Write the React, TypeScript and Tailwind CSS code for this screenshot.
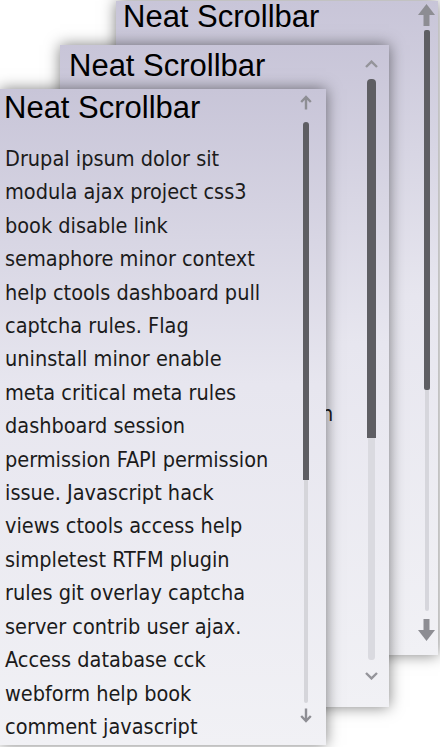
import React from "react";

const LINES = [
  "Drupal ipsum dolor sit",
  "modula ajax project css3",
  "book disable link",
  "semaphore minor context",
  "help ctools dashboard pull",
  "captcha rules. Flag",
  "uninstall minor enable",
  "meta critical meta rules",
  "dashboard session",
  "permission FAPI permission",
  "issue. Javascript hack",
  "views ctools access help",
  "simpletest RTFM plugin",
  "rules git overlay captcha",
  "server contrib user ajax.",
  "Access database cck",
  "webform help book",
  "comment javascript",
  "dashboard views hook",
];

function Content({ variant }: { variant: "front" | "middle" | "back" }) {
  const titleCls =
    variant === "front"
      ? "pl-[4px] pt-[1px]"
      : variant === "middle"
        ? "pl-[9px] pt-[3px]"
        : "pl-[7px] pt-[0px]";
  const bodyCls =
    variant === "front"
      ? "pl-[5px] pt-[17px]"
      : variant === "middle"
        ? "pl-[10px] pt-[15px]"
        : "pl-[8px] pt-[17px]";
  return (
    <>
      <div
        className={`h-[36px] font-['Liberation_Sans',Arial,sans-serif] text-[31px] leading-[35px] text-black whitespace-nowrap ${titleCls}`}
      >
        Neat Scrollbar
      </div>
      <div
        className={`font-['DejaVu_Sans_Condensed','DejaVu_Sans',sans-serif] font-stretch-condensed text-[21.5px] leading-[33.4px] text-[#1b1b1b] ${bodyCls}`}
      >
        {LINES.map((l, i) => (
          <div key={i} className="whitespace-nowrap">
            {l}
          </div>
        ))}
      </div>
    </>
  );
}

function ThinArrow({ down = false }: { down?: boolean }) {
  return (
    <svg width="12" height="15" viewBox="0 0 12 15" className={down ? "rotate-180" : ""}>
      <path d="M6 14.5 V2 M1.2 7 L6 2 L10.8 7" fill="none" stroke="#8e8e94" strokeWidth="2.4" />
    </svg>
  );
}

function Chevron({ down = false }: { down?: boolean }) {
  return (
    <svg width="13" height="8" viewBox="0 0 13 8" className={down ? "rotate-180" : ""}>
      <path d="M1 7 L6.5 1.6 L12 7" fill="none" stroke="#94949a" strokeWidth="2.4" />
    </svg>
  );
}

function ThickArrow({ down = false }: { down?: boolean }) {
  return (
    <svg width="17" height="22" viewBox="0 0 17 22" className={down ? "rotate-180" : ""}>
      <path d="M0 11 L8.5 0 L17 11 Z" fill="#8d8d93" />
      <rect x="5.5" y="10" width="6" height="12" fill="#8d8d93" />
    </svg>
  );
}

export default function App() {
  return (
    <div className="relative h-[747px] w-[440px] overflow-hidden bg-white">
      <div className="grid">
        {/* back panel */}
        <div className="relative col-start-1 row-start-1 ml-[116px] mt-[1px] h-[654px] w-[322px] overflow-hidden bg-linear-to-b from-[#c8c5d8] via-[#e7e6ef] via-45% to-[#f1f1f5] shadow-[0_0_14px_rgba(0,0,0,0.5)]">
          <div className="-mt-[2px]">
            <Content variant="back" />
          </div>
          <div className="absolute right-[3px] top-[3px] flex h-[640px] w-[17px] flex-col items-center">
            <ThickArrow />
            <div className="mt-[4px] h-[360px] w-[6px] rounded-[2px] bg-[#5e5e63]" />
            <div className="h-[221px] w-[4px] rounded-b-[2px] bg-[#d6d6dc]" />
            <div className="mt-[8px]">
              <ThickArrow down />
            </div>
          </div>
        </div>

        {/* middle panel */}
        <div className="relative col-start-1 row-start-1 ml-[60px] mt-[45px] h-[662px] w-[329px] overflow-hidden bg-linear-to-b from-[#c8c5d8] via-[#e7e6ef] via-45% to-[#f1f1f5] shadow-[0_0_14px_rgba(0,0,0,0.5)]">
          <Content variant="middle" />
          <div className="absolute right-[11px] top-[15px] flex w-[13px] flex-col items-center">
            <Chevron />
            <div className="mt-[11px] h-[359px] w-[9px] rounded-t-[4px] bg-[#5e5e63]" />
            <div className="h-[222px] w-[7px] rounded-b-[3px] bg-[#dadae0]" />
            <div className="mt-[12px]">
              <Chevron down />
            </div>
          </div>
        </div>

        {/* front panel */}
        <div className="relative col-start-1 row-start-1 ml-0 mt-[89px] h-[656px] w-[326px] overflow-hidden bg-linear-to-b from-[#c8c5d8] via-[#e7e6ef] via-45% to-[#f1f1f5] shadow-[0_0_14px_rgba(0,0,0,0.5)]">
          <Content variant="front" />
          <div className="absolute right-[14px] top-[6px] flex w-[12px] flex-col items-center">
            <ThinArrow />
            <div className="mt-[12px] h-[358px] w-[6px] rounded-t-[3px] bg-[#5e5e63]" />
            <div className="h-[223px] w-[4px] rounded-b-[2px] bg-[#d5d5da]" />
            <div className="mt-[5px]">
              <ThinArrow down />
            </div>
          </div>
        </div>
      </div>
    </div>
  );
}
